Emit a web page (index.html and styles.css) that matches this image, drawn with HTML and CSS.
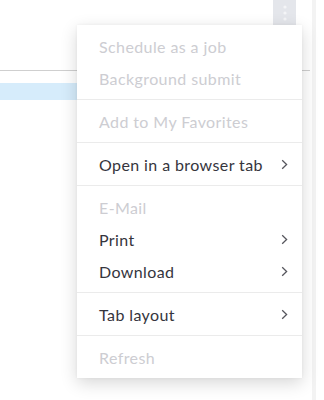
FILE: index.html
```html
<!DOCTYPE html>
<html lang="en">
<head>
    <meta charset="UTF-8">
    <meta name="viewport" content="width=device-width, initial-scale=1.0">
    <title>Menu</title>
    <link rel="stylesheet" href="styles.css">
</head>
<body>
    <div class="page">
        <div class="main">
            <div class="toolbar">
                <button class="more-btn">
                    <svg width="6" height="18" viewBox="0 0 6 18"><circle cx="3" cy="3" r="1.6" fill="#f4f5f7"/><circle cx="3" cy="9" r="1.6" fill="#f4f5f7"/><circle cx="3" cy="15" r="1.6" fill="#f4f5f7"/></svg>
                </button>
            </div>
            <div class="rule"></div>
            <div class="row-selected"></div>
        </div>
        <div class="side"></div>

        <ul class="menu">
            <li class="group">
                <div class="item disabled">Schedule as a job</div>
                <div class="item disabled">Background submit</div>
            </li>
            <li class="group">
                <div class="item disabled">Add to My Favorites</div>
            </li>
            <li class="group">
                <div class="item">Open in a browser tab <svg class="arrow" width="7" height="11" viewBox="0 0 7 11"><path d="M1.2 1.2 L5.6 5.5 L1.2 9.8" fill="none" stroke="#55555c" stroke-width="1.3"/></svg></div>
            </li>
            <li class="group">
                <div class="item disabled">E-Mail</div>
                <div class="item">Print <svg class="arrow" width="7" height="11" viewBox="0 0 7 11"><path d="M1.2 1.2 L5.6 5.5 L1.2 9.8" fill="none" stroke="#55555c" stroke-width="1.3"/></svg></div>
                <div class="item">Download <svg class="arrow" width="7" height="11" viewBox="0 0 7 11"><path d="M1.2 1.2 L5.6 5.5 L1.2 9.8" fill="none" stroke="#55555c" stroke-width="1.3"/></svg></div>
            </li>
            <li class="group">
                <div class="item">Tab layout <svg class="arrow" width="7" height="11" viewBox="0 0 7 11"><path d="M1.2 1.2 L5.6 5.5 L1.2 9.8" fill="none" stroke="#55555c" stroke-width="1.3"/></svg></div>
            </li>
            <li class="group">
                <div class="item disabled">Refresh</div>
            </li>
        </ul>
    </div>
</body>
</html>
```

FILE: styles.css
```css
*{
    margin: 0;
    padding: 0;
    box-sizing: border-box;
}
body{
    background: #fff;
    font-family: Lato, "Open Sans", sans-serif;
}
.page{
    width: 324px;
    height: 400px;
    display: flex;
    position: relative;
    overflow: hidden;
}
.main{
    width: 312px;
}
.side{
    width: 4px;
    background: #f3f3f3;
}
.toolbar{
    height: 25px;
    display: flex;
    justify-content: flex-end;
    padding-right: 16px;
}
.more-btn{
    width: 23px;
    height: 25px;
    border: none;
    background: #e4e6eb;
    display: flex;
    align-items: center;
    justify-content: center;
}
.rule{
    margin-top: 45px;
    height: 1px;
    background: #cfcfcf;
    width: 310px;
}
.row-selected{
    margin-top: 12px;
    height: 17px;
    width: 80px;
    background: #d6ecfb;
}
.menu{
    list-style: none;
    position: absolute;
    left: 77px;
    top: 25px;
    width: 225px;
    background: #fff;
    box-shadow: 0 5px 16px rgba(0, 0, 0, 0.16), 0 0 3px rgba(0, 0, 0, 0.05);
}
.group{
    padding: 5px 0;
    border-bottom: 1px solid #ebebeb;
}
.group:last-child{
    border-bottom: none;
}
.item{
    height: 32px;
    padding: 0 14px 0 22px;
    display: flex;
    align-items: center;
    justify-content: space-between;
    font-size: 16px;
    letter-spacing: 0.4px;
    color: #35353d;
}
.item.disabled{
    color: #cdcdd2;
}
.arrow{
    flex-shrink: 0;
}
```
